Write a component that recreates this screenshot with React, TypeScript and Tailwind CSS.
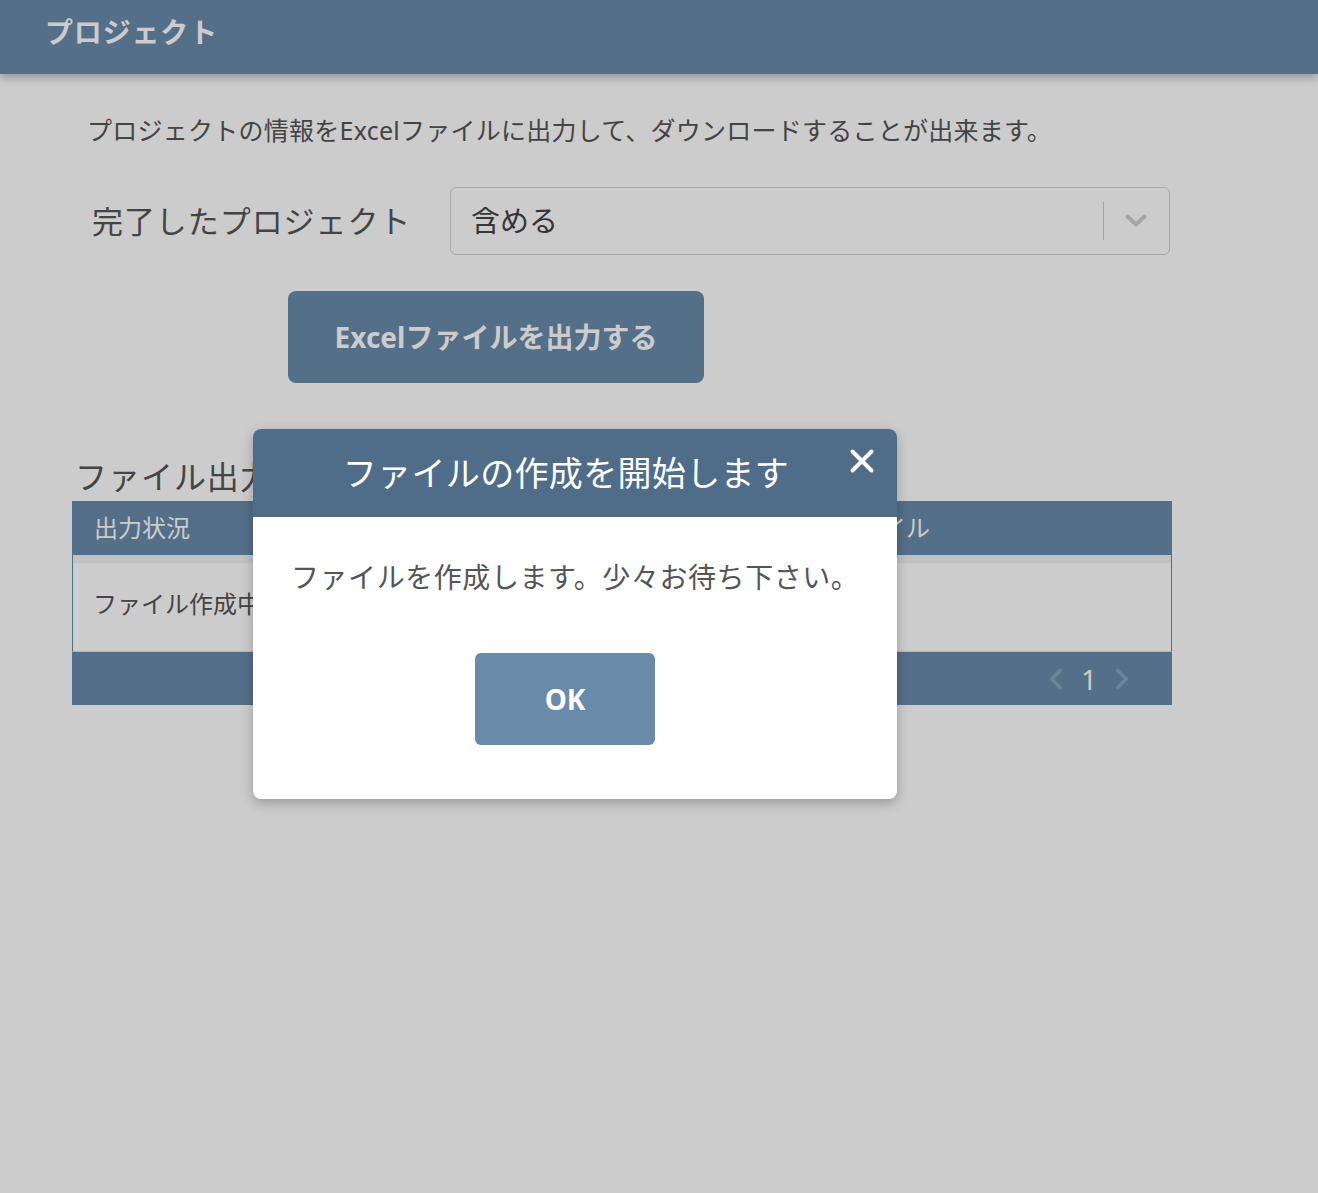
import { X, ChevronLeft, ChevronRight } from 'lucide-react';

const font = { fontFamily: '"Noto Sans", "Noto Sans CJK JP", sans-serif' };

export default function App() {
  return (
    <div className="relative min-h-[1193px] bg-white text-[#555]" style={font}>
      {/* HEADER */}
      <header className="h-[74px] bg-[#6a8bab] flex items-center px-[45px] pb-[10px] shadow-[0_4px_8px_rgba(0,0,0,0.25)]">
        <h1 className="text-[28px] font-bold text-white tracking-[0.03em]">プロジェクト</h1>
      </header>

      <main className="ml-[72px] w-[1100px] pt-[38px]">
        <p className="pl-[15px] text-[25px] leading-[36px] text-[#555] tracking-[0.01em]">
          プロジェクトの情報をExcelファイルに出力して、ダウンロードすることが出来ます。
        </p>

        {/* FILTER */}
        <div className="mt-[39px] flex items-center">
          <label className="w-[378px] pl-[20px] text-[31px] text-[#555] tracking-[0.03em]">完了したプロジェクト</label>
          <div className="w-[720px] h-[68px] border border-[#d4d4d4] rounded-[6px] flex items-center pl-[20px] pr-[22px]">
            <span className="flex-1 text-[29px] text-[#444]">含める</span>
            <div className="w-px h-[38px] bg-[#cfcfcf]" />
            <svg width="22" height="14" viewBox="0 0 22 14" className="ml-[21px]">
              <path d="M2.5 2.5 L11 10.5 L19.5 2.5" fill="none" stroke="#cfcfcf" strokeWidth="4" strokeLinecap="round" strokeLinejoin="round" />
            </svg>
          </div>
        </div>

        {/* EXPORT BUTTON */}
        <div className="mt-[36px] ml-[216px]">
          <button className="w-[416px] h-[92px] rounded-[8px] bg-[#6a8bab] text-white text-[28px] font-bold">
            Excelファイルを出力する
          </button>
        </div>

        {/* HISTORY */}
        <h2 className="mt-[70px] ml-[3px] text-[32px] leading-[48px] text-[#555] tracking-[0.03em]">ファイル出力履歴</h2>
        <div className="w-[1100px]">
          <div className="h-[54px] bg-[#6a8bab] flex items-center text-[24px] text-white">
            <div className="w-[714px] pl-[22px]">出力状況</div>
            <div className="flex-1">出力ファイル</div>
          </div>
          <div className="border-x border-[#6a8bab] border-b border-b-[#e4e4e4]">
            <div className="h-[8px] bg-[#f3f3f3]" />
            <div className="h-[88px] flex items-center pl-[20px] pb-[6px] text-[24px] text-[#555]">ファイル作成中</div>
          </div>
          <div className="h-[53px] bg-[#6a8bab] flex items-center justify-end pr-[33px] gap-[4px] text-white">
            <ChevronLeft size={34} strokeWidth={2.5} className="text-[#8aa4bd]" />
            <span className="text-[28px] w-[24px] text-center">1</span>
            <ChevronRight size={34} strokeWidth={2.5} className="text-[#8aa4bd]" />
          </div>
        </div>
      </main>

      {/* OVERLAY */}
      <div className="absolute inset-0 bg-black/20" />

      {/* MODAL */}
      <div className="absolute left-[253px] top-[429px] w-[644px] h-[370px] bg-white rounded-[8px] overflow-hidden shadow-[0_4px_12px_rgba(0,0,0,0.25)]">
        <div className="relative h-[88px] bg-[#4f6c89] flex items-center justify-center">
          <h3 className="text-[34px] text-white tracking-[0.01em] -ml-[18px]">ファイルの作成を開始します</h3>
          <X size={38} strokeWidth={2.5} className="absolute right-[16px] top-[13px] text-white" />
        </div>
        <p className="mt-[40px] pl-[38px] text-[28px] leading-[40px] text-[#555] tracking-[0.02em]">ファイルを作成します。少々お待ち下さい。</p>
        <div className="mt-[56px] flex justify-center pr-[20px]">
          <button className="w-[180px] h-[92px] rounded-[6px] bg-[#6a8aaa] text-white text-[28px] font-bold">OK</button>
        </div>
      </div>
    </div>
  );
}
